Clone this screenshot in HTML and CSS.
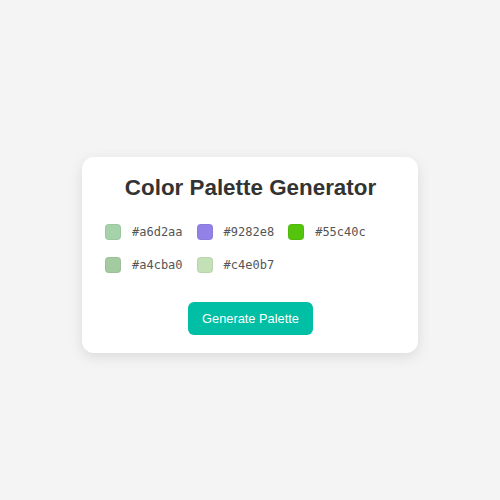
FILE: index.html
```html
<!DOCTYPE html>
<html lang="en">
<head>
<meta charset="utf-8">
<title>Color Palette Generator</title>
<link rel="stylesheet" href="styles.css">
</head>
<body>
  <div class="card">
    <h1 class="title">Color Palette Generator</h1>
    <div class="palette">
      <div class="item"><span class="swatch" style="background:#a6d2aa"></span><span class="code">#a6d2aa</span></div>
      <div class="item"><span class="swatch" style="background:#9282e8"></span><span class="code">#9282e8</span></div>
      <div class="item"><span class="swatch" style="background:#55c40c"></span><span class="code">#55c40c</span></div>
      <div class="item"><span class="swatch" style="background:#a4cba0"></span><span class="code">#a4cba0</span></div>
      <div class="item"><span class="swatch" style="background:#c4e0b7"></span><span class="code">#c4e0b7</span></div>
    </div>
    <div class="actions">
      <button class="btn" type="button">Generate Palette</button>
    </div>
  </div>
</body>
</html>
```

FILE: styles.css
```css
html, body {
  margin: 0;
  padding: 0;
}
body {
  background: #f4f4f4;
  font-family: "Liberation Sans", Arial, sans-serif;
  min-height: 100vh;
  box-sizing: border-box;
  padding-top: 10px;
  display: flex;
  align-items: center;
  justify-content: center;
}
.card {
  width: 336px;
  box-sizing: border-box;
  background: #ffffff;
  border-radius: 12px;
  box-shadow: 0 4px 14px rgba(0, 0, 0, 0.1);
  padding: 18px 22px 18px 23px;
}
.title {
  margin: 0 0 23px 0;
  font-size: 22.4px;
  font-weight: bold;
  color: #333333;
  text-align: center;
}
.palette {
  display: flex;
  flex-wrap: wrap;
  column-gap: 14px;
  row-gap: 17px;
}
.item {
  display: flex;
  align-items: center;
  gap: 11px;
  height: 16px;
}
.swatch {
  width: 16px;
  height: 16px;
  border-radius: 4px;
  box-sizing: border-box;
  border: 1px solid rgba(0, 0, 0, 0.05);
}
.code {
  font-family: "DejaVu Sans Mono", monospace;
  font-size: 12px;
  color: #555555;
}
.actions {
  display: flex;
  justify-content: center;
  margin-top: 29px;
}
.btn {
  font-family: "Liberation Sans", Arial, sans-serif;
  font-size: 12.8px;
  color: #ffffff;
  background: #00bfa5;
  border: none;
  border-radius: 6px;
  padding: 9px 14px;
  line-height: normal;
  cursor: pointer;
}
```
